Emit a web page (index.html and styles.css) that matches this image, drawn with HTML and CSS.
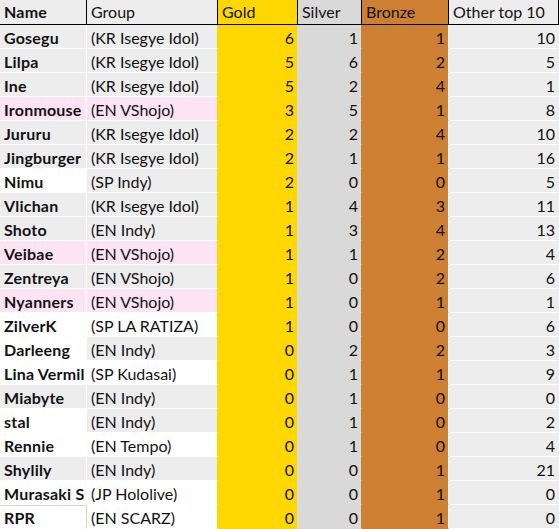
FILE: index.html
```html
<!DOCTYPE html>
<html>
<head>
<meta charset="utf-8">
<link rel="stylesheet" href="styles.css">
</head>
<body>
<div class="sheet">
  <div class="row head">
    <div class="c name">Name</div>
    <div class="c group">Group</div>
    <div class="c gold">Gold</div>
    <div class="c silver">Silver</div>
    <div class="c bronze">Bronze</div>
    <div class="c other">Other top 10</div>
  </div>
  <div class="row"><div class="c name">Gosegu</div><div class="c group">(KR Isegye Idol)</div><div class="c gold">6</div><div class="c silver">1</div><div class="c bronze">1</div><div class="c other">10</div></div>
  <div class="row"><div class="c name">Lilpa</div><div class="c group">(KR Isegye Idol)</div><div class="c gold">5</div><div class="c silver">6</div><div class="c bronze">2</div><div class="c other">5</div></div>
  <div class="row"><div class="c name">Ine</div><div class="c group">(KR Isegye Idol)</div><div class="c gold">5</div><div class="c silver">2</div><div class="c bronze">4</div><div class="c other">1</div></div>
  <div class="row"><div class="c name pink">Ironmouse</div><div class="c group pink">(EN VShojo)</div><div class="c gold">3</div><div class="c silver">5</div><div class="c bronze">1</div><div class="c other">8</div></div>
  <div class="row"><div class="c name">Jururu</div><div class="c group">(KR Isegye Idol)</div><div class="c gold">2</div><div class="c silver">2</div><div class="c bronze">4</div><div class="c other">10</div></div>
  <div class="row"><div class="c name">Jingburger</div><div class="c group">(KR Isegye Idol)</div><div class="c gold">2</div><div class="c silver">1</div><div class="c bronze">1</div><div class="c other">16</div></div>
  <div class="row"><div class="c name white">Nimu</div><div class="c group">(SP Indy)</div><div class="c gold">2</div><div class="c silver">0</div><div class="c bronze">0</div><div class="c other">5</div></div>
  <div class="row"><div class="c name">Vlichan</div><div class="c group">(KR Isegye Idol)</div><div class="c gold">1</div><div class="c silver">4</div><div class="c bronze">3</div><div class="c other">11</div></div>
  <div class="row"><div class="c name">Shoto</div><div class="c group">(EN Indy)</div><div class="c gold">1</div><div class="c silver">3</div><div class="c bronze">4</div><div class="c other">13</div></div>
  <div class="row"><div class="c name pink">Veibae</div><div class="c group pink">(EN VShojo)</div><div class="c gold">1</div><div class="c silver">1</div><div class="c bronze">2</div><div class="c other">4</div></div>
  <div class="row"><div class="c name">Zentreya</div><div class="c group">(EN VShojo)</div><div class="c gold">1</div><div class="c silver">0</div><div class="c bronze">2</div><div class="c other">6</div></div>
  <div class="row"><div class="c name pink">Nyanners</div><div class="c group pink">(EN VShojo)</div><div class="c gold">1</div><div class="c silver">0</div><div class="c bronze">1</div><div class="c other">1</div></div>
  <div class="row"><div class="c name white">ZilverK</div><div class="c group white">(SP LA RATIZA)</div><div class="c gold">1</div><div class="c silver">0</div><div class="c bronze">0</div><div class="c other">6</div></div>
  <div class="row"><div class="c name white">Darleeng</div><div class="c group">(EN Indy)</div><div class="c gold">0</div><div class="c silver">2</div><div class="c bronze">2</div><div class="c other">3</div></div>
  <div class="row"><div class="c name white">Lina Vermil</div><div class="c group white">(SP Kudasai)</div><div class="c gold">0</div><div class="c silver">1</div><div class="c bronze">1</div><div class="c other">9</div></div>
  <div class="row"><div class="c name">Miabyte</div><div class="c group">(EN Indy)</div><div class="c gold">0</div><div class="c silver">1</div><div class="c bronze">0</div><div class="c other">0</div></div>
  <div class="row"><div class="c name white">stal</div><div class="c group">(EN Indy)</div><div class="c gold">0</div><div class="c silver">1</div><div class="c bronze">0</div><div class="c other">2</div></div>
  <div class="row"><div class="c name white">Rennie</div><div class="c group white">(EN Tempo)</div><div class="c gold">0</div><div class="c silver">1</div><div class="c bronze">0</div><div class="c other">4</div></div>
  <div class="row"><div class="c name">Shylily</div><div class="c group">(EN Indy)</div><div class="c gold">0</div><div class="c silver">0</div><div class="c bronze">1</div><div class="c other">21</div></div>
  <div class="row"><div class="c name white">Murasaki S</div><div class="c group white">(JP Hololive)</div><div class="c gold">0</div><div class="c silver">0</div><div class="c bronze">1</div><div class="c other">0</div></div>
  <div class="row"><div class="c name white framed">RPR</div><div class="c group white">(EN SCARZ)</div><div class="c gold">0</div><div class="c silver">0</div><div class="c bronze">1</div><div class="c other">0</div></div>
</div>
</body>
</html>
```
FILE: styles.css
```css
html, body {
  margin: 0;
  padding: 0;
  background: #ffffff;
}

.sheet {
  width: 559px;
  font-family: Lato, "Liberation Sans", sans-serif;
  font-size: 16px;
  color: #121212;
}

.row {
  display: grid;
  grid-template-columns: 87px 131px 80px 64px 87px 110px;
  height: 24px;
}

.c {
  box-sizing: border-box;
  height: 24px;
  line-height: 23px;
  padding-top: 1px;
  border-right: 1px solid #ffffff;
  border-bottom: 1px solid #ffffff;
  background: #ededed;
  white-space: nowrap;
  overflow: hidden;
}

.name {
  font-weight: bold;
  padding-left: 4px;
  letter-spacing: 0.2px;
}

.group {
  padding-left: 4px;
  border-right-color: #ffd700;
}

.gold {
  background: #ffd700;
  border-right-color: #d9d9d9;
  border-bottom-color: #ffd700;
  text-align: right;
  padding-right: 3px;
}

.silver {
  background: #d9d9d9;
  border-right-color: #cd7f32;
  border-bottom-color: #d9d9d9;
  text-align: right;
  padding-right: 3px;
}

.bronze {
  background: #cd7f32;
  border-right-color: #ffffff;
  border-bottom-color: #cd7f32;
  text-align: right;
  padding-right: 3px;
}

.other {
  border-right-color: #ededed;
  text-align: right;
  padding-right: 3px;
}

.pink {
  background: #fce4f5;
}

.white {
  background: #ffffff;
}

.framed {
  border-top: 1px solid #d4d4d4;
  border-right-color: #d4d4d4;
  padding-top: 0;
}

.head {
  height: 25px;
}

.head .c {
  height: 25px;
  line-height: 23px;
  padding-top: 0;
  border-right-color: #000000;
  border-bottom-color: #000000;
  text-align: left;
  padding-left: 4px;
  padding-right: 0;
  font-weight: normal;
}

.head .name {
  font-weight: bold;
}

.head .silver {
  background: #d9d9d9;
}
```
